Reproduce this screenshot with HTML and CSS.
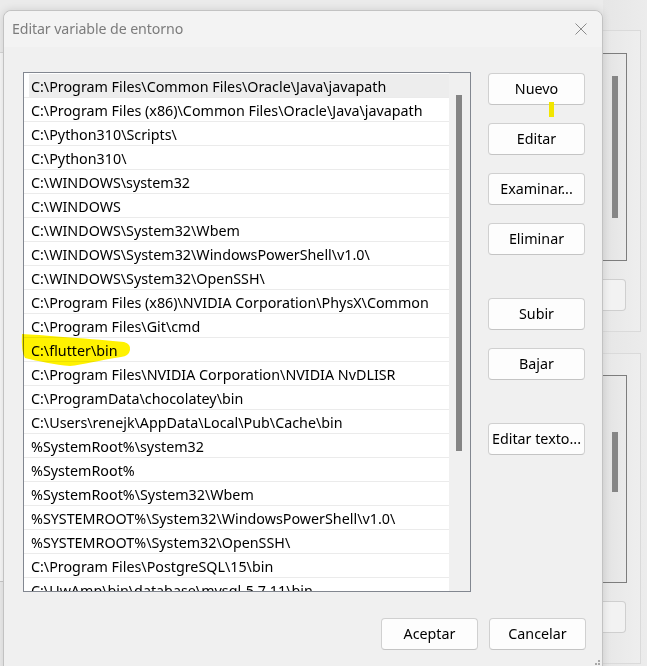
FILE: index.html
```html
<!DOCTYPE html>
<html lang="es">
<head>
<meta charset="utf-8">
<title>Editar variable de entorno</title>
<link rel="stylesheet" href="styles.css">
</head>
<body>
<div class="screen">
  <div class="behind-left"><div class="bl-panel"></div></div>

  <div class="dialog">
    <div class="titlebar">
      <span class="title">Editar variable de entorno</span>
      <span class="close" aria-label="Cerrar">
        <svg width="12" height="12" viewBox="0 0 12 12"><path d="M0.5 0.5 L11.5 11.5 M11.5 0.5 L0.5 11.5" stroke="#8b8b8b" stroke-width="1" fill="none"/></svg>
      </span>
    </div>

    <div class="content">
      <div class="listbox">
        <div class="rows">
          <div class="row selected">C:\Program Files\Common Files\Oracle\Java\javapath</div>
          <div class="row">C:\Program Files (x86)\Common Files\Oracle\Java\javapath</div>
          <div class="row">C:\Python310\Scripts\</div>
          <div class="row">C:\Python310\</div>
          <div class="row">C:\WINDOWS\system32</div>
          <div class="row">C:\WINDOWS</div>
          <div class="row">C:\WINDOWS\System32\Wbem</div>
          <div class="row">C:\WINDOWS\System32\WindowsPowerShell\v1.0\</div>
          <div class="row">C:\WINDOWS\System32\OpenSSH\</div>
          <div class="row">C:\Program Files (x86)\NVIDIA Corporation\PhysX\Common</div>
          <div class="row">C:\Program Files\Git\cmd</div>
          <div class="row">C:\flutter\bin</div>
          <div class="row">C:\Program Files\NVIDIA Corporation\NVIDIA NvDLISR</div>
          <div class="row">C:\ProgramData\chocolatey\bin</div>
          <div class="row">C:\Users\renejk\AppData\Local\Pub\Cache\bin</div>
          <div class="row">%SystemRoot%\system32</div>
          <div class="row">%SystemRoot%</div>
          <div class="row">%SystemRoot%\System32\Wbem</div>
          <div class="row">%SYSTEMROOT%\System32\WindowsPowerShell\v1.0\</div>
          <div class="row">%SYSTEMROOT%\System32\OpenSSH\</div>
          <div class="row">C:\Program Files\PostgreSQL\15\bin</div>
          <div class="row">C:\UwAmp\bin\database\mysql-5.7.11\bin</div>
        </div>
        <div class="vscroll"><div class="thumb"></div></div>
      </div>

      <div class="side">
        <button class="btn">Nuevo</button>
        <button class="btn">Editar</button>
        <button class="btn">Examinar...</button>
        <button class="btn">Eliminar</button>
        <button class="btn spaced">Subir</button>
        <button class="btn">Bajar</button>
        <button class="btn spaced">Editar texto...</button>
      </div>
    </div>

    <div class="footer">
      <button class="btn">Aceptar</button>
      <button class="btn">Cancelar</button>
    </div>

    <svg class="marker" width="112" height="36" viewBox="0 0 112 36">
      <path d="M2 2 C20 3 60 6 104 10 Q111 12 110 18 Q109 24 101 25 C80 28 62 33 50 34 C35 33 18 29 5 26 Q1 20 2 2 Z" fill="#fff200"/>
    </svg>
    <div class="mark-bar"></div>
    <svg class="grip" width="9" height="8" viewBox="0 0 9 8">
      <rect x="6" y="0" width="2" height="2" fill="#a8a8a8"/>
      <rect x="3" y="3" width="2" height="2" fill="#a8a8a8"/>
      <rect x="6" y="3" width="2" height="2" fill="#a8a8a8"/>
      <rect x="0" y="6" width="2" height="2" fill="#a8a8a8"/>
      <rect x="3" y="6" width="2" height="2" fill="#a8a8a8"/>
      <rect x="6" y="6" width="2" height="2" fill="#a8a8a8"/>
    </svg>
  </div>

  <div class="behind-right">
    <div class="group first">
      <div class="bg-list tall"><div class="bg-thumb t1"></div></div>
      <div class="bg-btn"></div>
    </div>
    <div class="group second">
      <div class="bg-list tall2"><div class="bg-thumb t2"></div></div>
      <div class="bg-btn"></div>
    </div>
  </div>
</div>
</body>
</html>
```

FILE: styles.css
```css
* { box-sizing: border-box; }

html, body {
  margin: 0;
  padding: 0;
  width: 647px;
  height: 666px;
  overflow: hidden;
  background: #ebebeb;
  font-family: "Noto Sans", "Segoe UI", sans-serif;
}

.screen {
  display: flex;
  width: 647px;
  height: 666px;
  align-items: flex-start;
}

/* window behind, left sliver */
.behind-left {
  width: 3px;
  height: 666px;
  flex: none;
  padding-top: 52px;
}
.bl-panel {
  width: 3px;
  height: 530px;
  background: #f7f7f7;
  border-top: 1px solid #d6d6d6;
  border-bottom: 1px solid #c8c8c8;
}

/* dialog */
.dialog {
  position: relative;
  flex: none;
  width: 600px;
  height: 672px;
  margin-top: 10px;
  background: #f0f0f0;
  border: 1px solid #c2c2c2;
  border-radius: 8px 8px 0 0;
  box-shadow: 0 0 8px rgba(0, 0, 0, 0.12);
}

.titlebar {
  height: 36px;
  display: flex;
  align-items: center;
  justify-content: space-between;
  padding: 0 15px 0 8px;
  background: #f3f3f3;
  border-radius: 8px 8px 0 0;
}
.title {
  font-size: 14.2px;
  color: #7c7c7c;
  letter-spacing: -0.1px;
  margin-top: -1px;
}
.close {
  display: flex;
  width: 12px;
  height: 12px;
  margin-top: -1px;
}

.content {
  display: flex;
  gap: 17px;
  padding: 25px 17px 0 19px;
}

.listbox {
  display: flex;
  width: 448px;
  height: 520px;
  border: 1px solid #828790;
  background: #ffffff;
  overflow: hidden;
}
.rows {
  width: 425px;
  padding-top: 1px;
  overflow: hidden;
}
.row {
  height: 24px;
  line-height: 21px;
  padding: 2px 0 0 7px;
  font-size: 14.3px;
  color: #000;
  white-space: nowrap;
  border-bottom: 1px solid #ebebeb;
}
.row.selected {
  background: linear-gradient(to right, #ffffff 0 5px, #ededed 5px);
}
.vscroll {
  width: 21px;
  background: #f0f0f0;
  padding: 22px 0 0 7px;
}
.thumb {
  width: 6px;
  height: 356px;
  background: #858585;
}

.side {
  display: flex;
  flex-direction: column;
  gap: 18px;
  padding-top: 1px;
}
.btn {
  width: 97px;
  height: 32px;
  padding: 0;
  margin: 0;
  background: #fdfdfd;
  border: 1px solid #d0d0d0;
  border-bottom-color: #c4c4c4;
  border-radius: 4px;
  font-family: "Noto Sans", "Segoe UI", sans-serif;
  font-size: 14.3px;
  color: #000;
  line-height: 28px;
}
.btn.spaced { margin-top: 25px; }

.footer {
  display: flex;
  justify-content: flex-end;
  gap: 11px;
  padding: 26px 16px 0 0;
}

.marker {
  position: absolute;
  left: 16px;
  top: 321px;
  mix-blend-mode: multiply;
}
.mark-bar {
  position: absolute;
  left: 545px;
  top: 91px;
  width: 5px;
  height: 15px;
  background: #f2e600;
}
.grip {
  position: absolute;
  right: 1px;
  top: 649px;
}

/* window behind, right sliver */
.behind-right {
  flex: none;
  width: 44px;
  height: 666px;
  padding-top: 30px;
  display: flex;
  flex-direction: column;
  gap: 21px;
  background: linear-gradient(to right, #e6e6e6, #ececec);
}
.group {
  width: 38px;
  border-top: 1px solid #dadada;
  border-right: 1px solid #dadada;
  border-bottom: 1px solid #dadada;
  background: linear-gradient(to right, #e7e7e7, #eeeeee);
}
.group.first { height: 302px; padding-top: 22px; }
.group.second { height: 311px; padding-top: 21px; }
.bg-list {
  width: 24px;
  border-top: 1px solid #7d7d7d;
  border-right: 1px solid #7d7d7d;
  border-bottom: 1px solid #7d7d7d;
  background: linear-gradient(to right, #e2e2e2, #ebebeb);
  padding-left: 9px;
}
.bg-list.tall { height: 208px; padding-top: 22px; }
.bg-list.tall2 { height: 208px; padding-top: 56px; }
.bg-thumb {
  width: 6px;
  background: #868686;
}
.bg-thumb.t1 { height: 142px; }
.bg-thumb.t2 { height: 60px; }
.bg-btn {
  width: 23px;
  height: 32px;
  margin-top: 18px;
  background: #f2f2f2;
  border: 1px solid #cfcfcf;
  border-left: none;
  border-radius: 0 4px 4px 0;
}
```
